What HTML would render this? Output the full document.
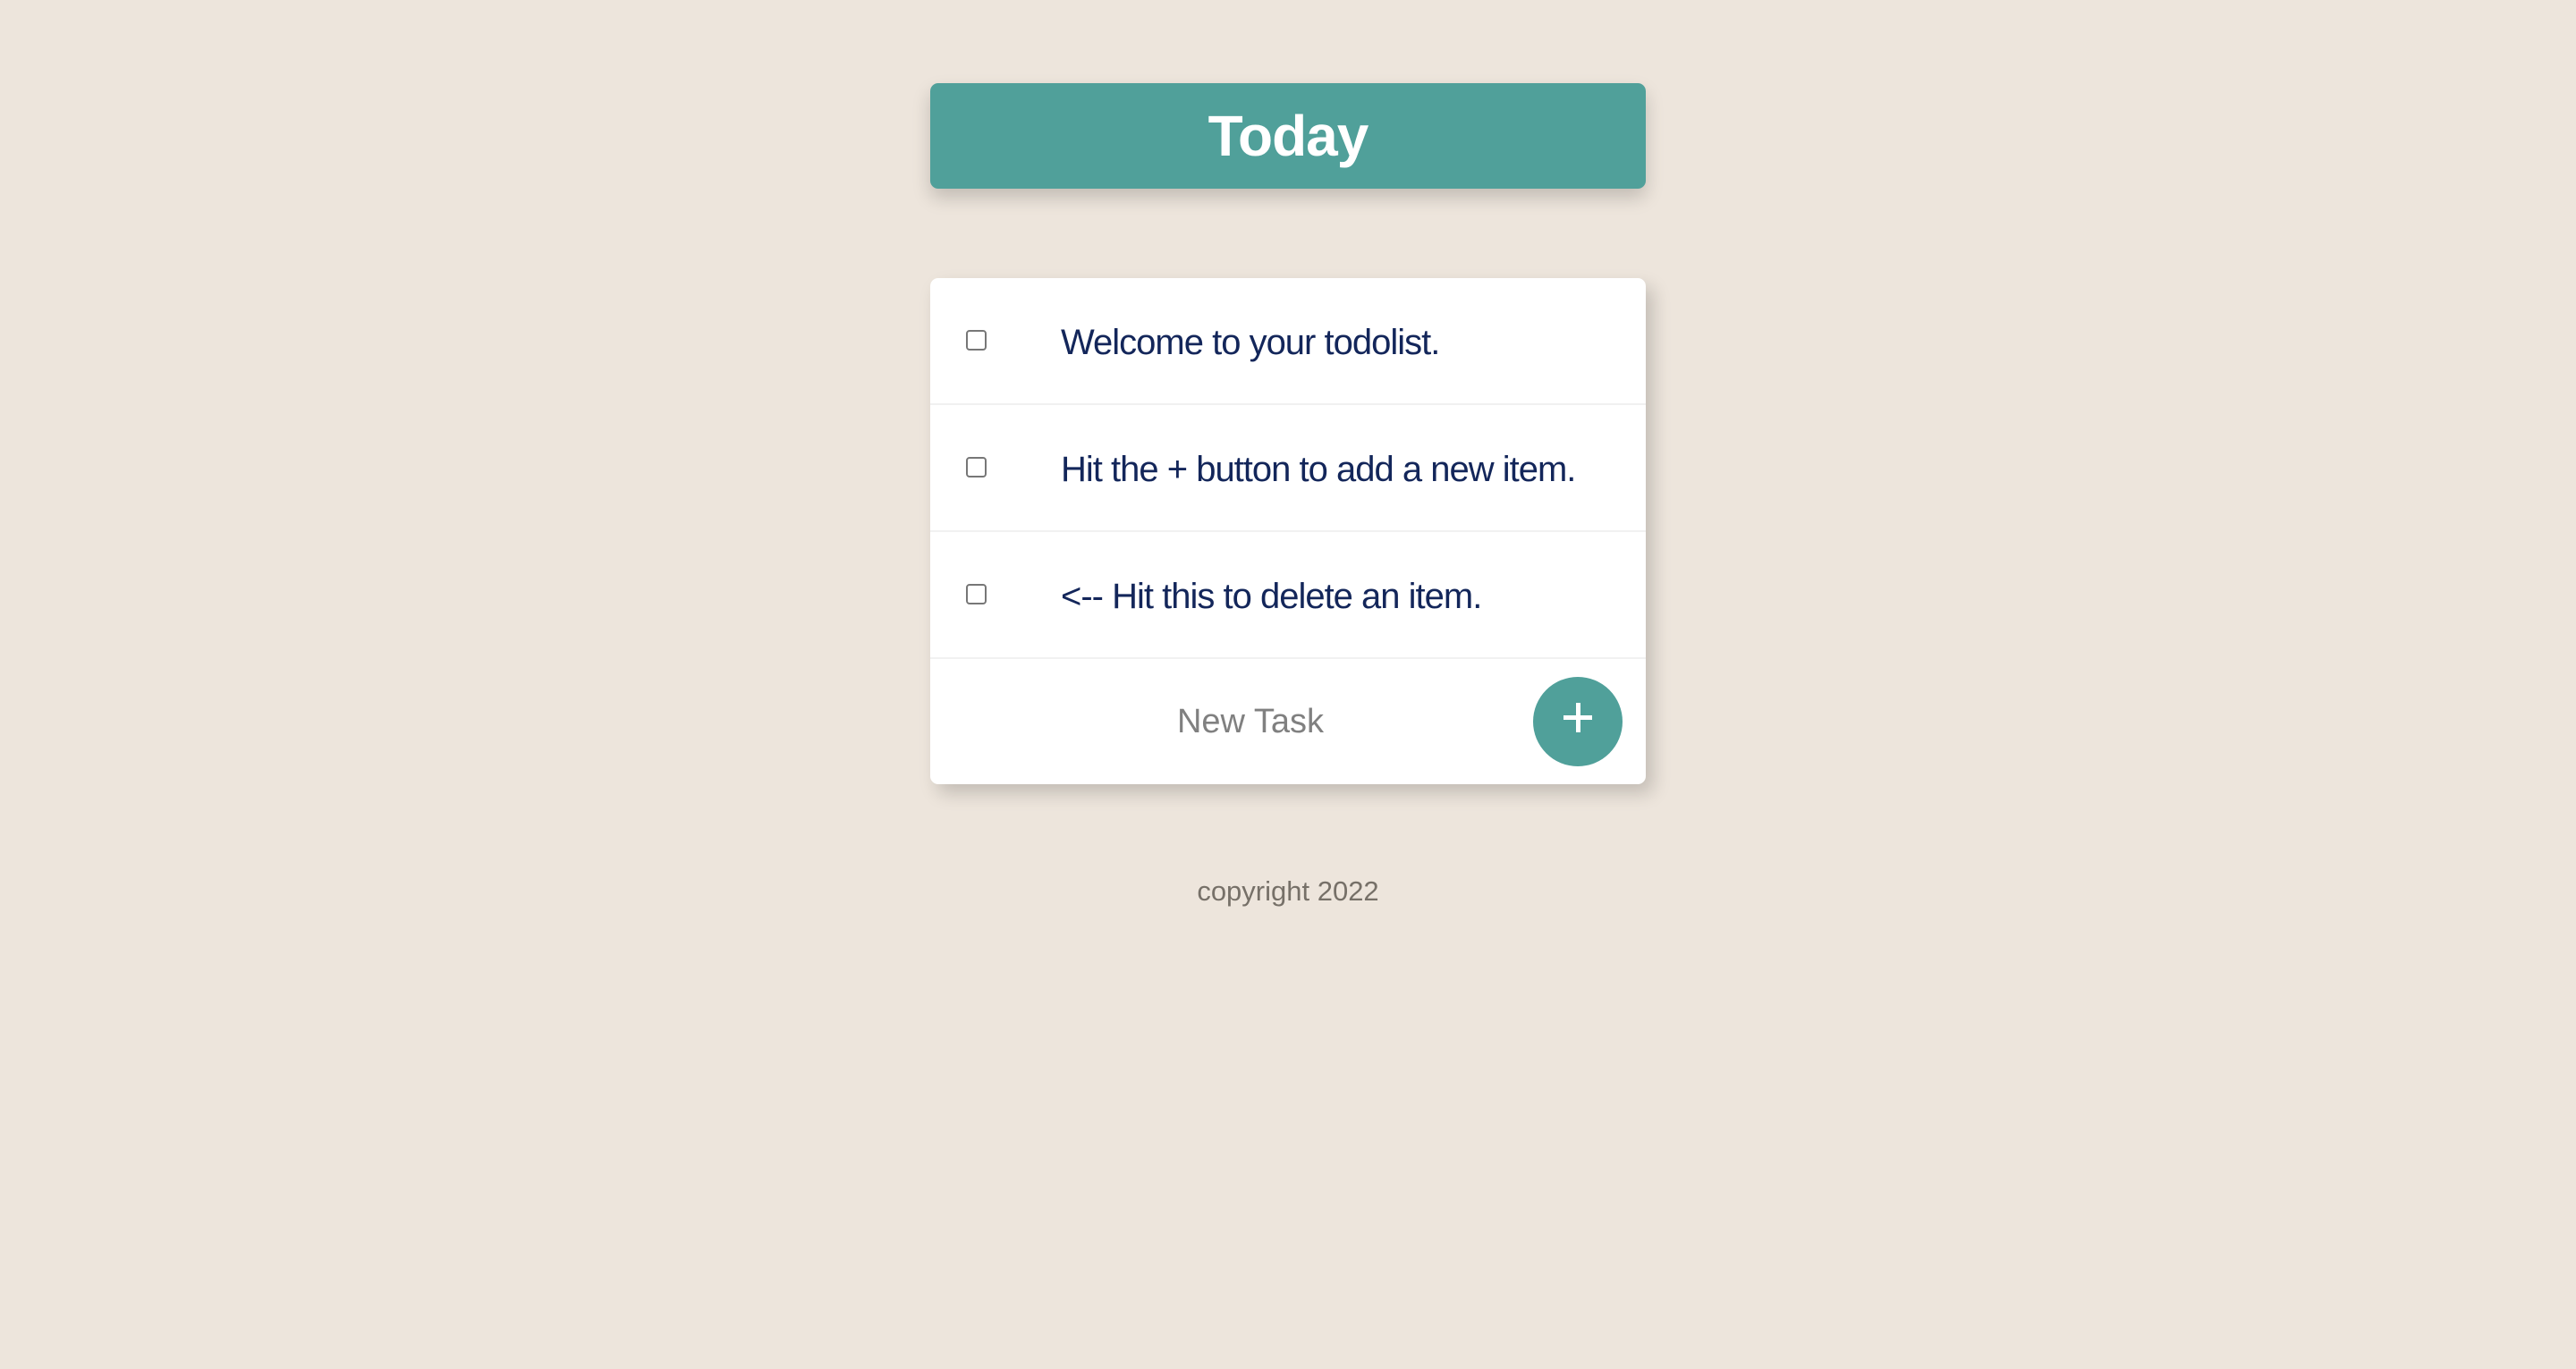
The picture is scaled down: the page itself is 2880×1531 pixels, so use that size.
<!DOCTYPE html>
<html><head><meta charset="utf-8"><style>
html,body{margin:0;padding:0;}
body{width:2880px;height:1531px;background:#ede5dc;font-family:"Liberation Sans",sans-serif;position:relative;overflow:hidden;}
.head{position:absolute;left:1040px;top:93px;width:800px;height:118px;background:#50a09a;border-radius:9px;box-shadow:0 10px 20px rgba(0,0,0,0.18);color:#fff;font-weight:bold;font-size:64px;text-align:center;line-height:118px;letter-spacing:-1px;}
.card{position:absolute;left:1040px;top:311px;width:800px;height:566px;background:#fff;border-radius:9px;box-shadow:8px 10px 20px rgba(0,0,0,0.18);overflow:hidden;}
.row{position:absolute;left:0;width:800px;height:140px;border-bottom:2px solid #f1f1f1;}
.cb{position:absolute;left:40px;top:58px;width:23px;height:23px;border:2px solid #777;border-radius:4px;box-sizing:border-box;}
.t{position:absolute;left:146px;top:2px;line-height:140px;font-size:40px;color:#13265a;letter-spacing:-1px;}
.nt{position:absolute;left:0;width:716px;top:425px;height:142px;line-height:142px;text-align:center;font-size:38px;color:#808080;}
.plus{position:absolute;left:674px;top:446px;width:100px;height:100px;border-radius:50%;background:#50a09a;}
.plus:before{content:"";position:absolute;left:34px;top:43px;width:32px;height:5px;background:#fff;}
.plus:after{content:"";position:absolute;left:47.5px;top:29px;width:5px;height:33px;background:#fff;}
.copy{position:absolute;left:0;width:2880px;top:979px;text-align:center;font-size:31px;color:#767068;}
</style></head><body>
<div class="head">Today</div>
<div class="card">
<div class="row" style="top:0"><div class="cb"></div><div class="t">Welcome to your todolist.</div></div>
<div class="row" style="top:142px"><div class="cb"></div><div class="t">Hit the + button to add a new item.</div></div>
<div class="row" style="top:284px"><div class="cb"></div><div class="t">&lt;-- Hit this to delete an item.</div></div>
<div class="nt">New Task</div>
<div class="plus"></div>
</div>
<div class="copy">copyright 2022</div>
</body></html>
